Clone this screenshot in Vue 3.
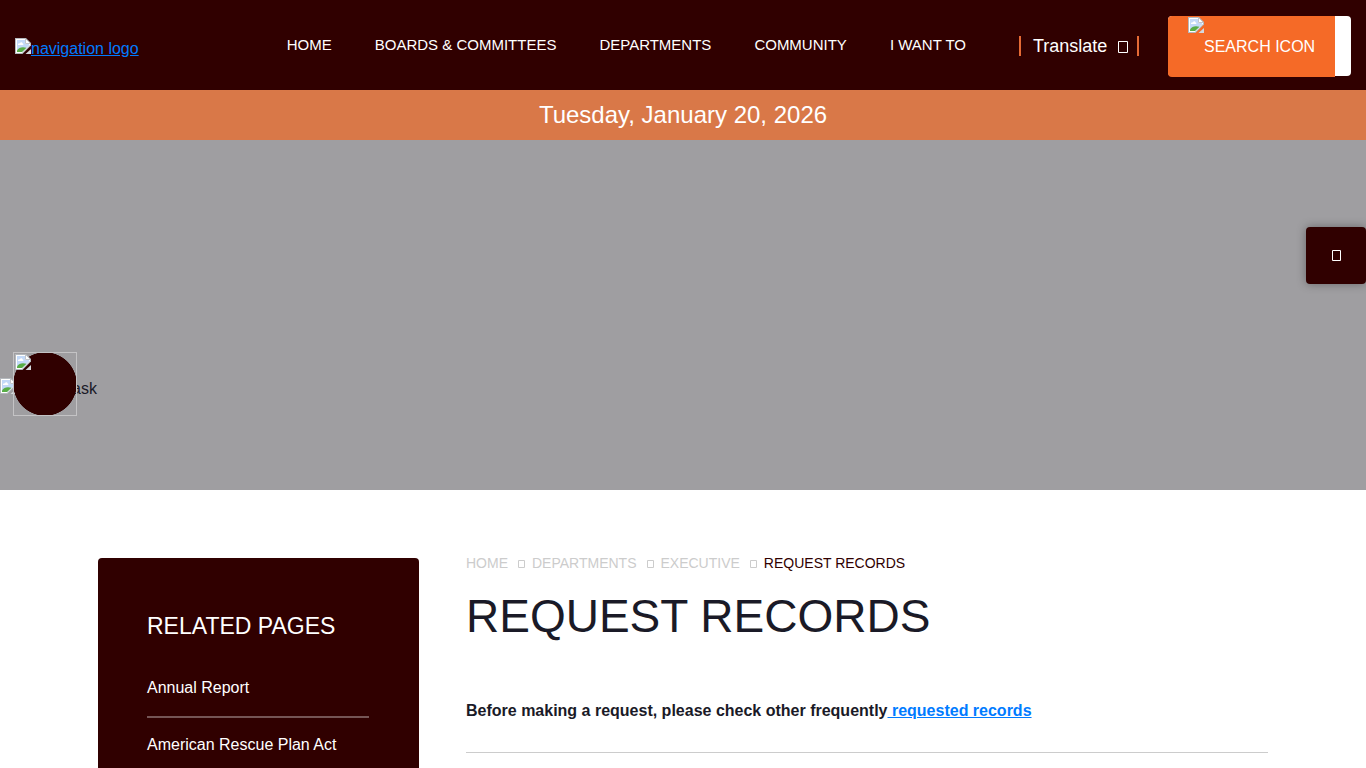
<script setup>
import { h } from 'vue'

const navItems = ['HOME', 'BOARDS & COMMITTEES', 'DEPARTMENTS', 'COMMUNITY', 'I WANT TO']
const crumbs = ['HOME', 'DEPARTMENTS', 'EXECUTIVE']
const related = ['Annual Report', 'American Rescue Plan Act']

const PictureIcon = () =>
  h('svg', { width: 16, height: 16, viewBox: '0 0 16 16', 'aria-hidden': 'true' }, [
    h('path', { d: 'M0 0h11l5 5v2.500L7.500 16H0z', fill: '#b4b8bd' }),
    h('path', { d: 'M1 1h9.500l4.500 4.500v1.500L7 15H1z', fill: '#fff' }),
    h('path', { d: 'M2 2h8v4h4v1.500L7 14H2z', fill: '#c3d9f8' }),
    h('path', { d: 'M3 7c-.3-1.200.8-2 1.800-1.600C5.300 3.800 7.400 4 7.600 5.500c1.100 0 1.200 1.500.1 1.500z', fill: '#fff' }),
    h('path', { d: 'M2 14v-1.500C4 9.500 7 8.500 11.500 9.800L7 14z', fill: '#58ad45' }),
    h('path', { d: 'M10.500.5V5.500H15.500z', fill: '#fff', stroke: '#b4b8bd', 'stroke-width': 0.8 }),
    h('path', { d: 'M16 11v5h-5.500z', fill: '#d4d8dc' })
  ])
</script>

<template>
  <div class="page">
    <header class="header">
      <a class="logo" href="#"><PictureIcon /><span>navigation logo</span></a>
      <nav class="nav" aria-label="Main">
        <a v-for="item in navItems" :key="item" href="#">{{ item }}</a>
      </nav>
      <button class="translate" type="button">
        Translate
        <svg width="10" height="12" viewBox="0 0 10 12" aria-hidden="true"><path d="M.5.5h9v11h-9z" /></svg>
      </button>
      <div class="search">
        <button type="button"><PictureIcon /><span>SEARCH ICON</span></button>
      </div>
    </header>

    <div class="date">Tuesday, January 20, 2026</div>

    <section class="hero">
      <div class="mask"><PictureIcon /><span>video mask</span></div>
      <button class="access" type="button" aria-label="Accessibility"><PictureIcon /></button>
      <button class="share" type="button" aria-label="Share">
        <svg width="9" height="11" viewBox="0 0 9 11" aria-hidden="true"><path d="M.5.5h8v10h-8z" /></svg>
      </button>
    </section>

    <main class="main">
      <aside class="sidebar">
        <h2>RELATED PAGES</h2>
        <ul>
          <li v-for="item in related" :key="item"><a href="#">{{ item }}</a></li>
        </ul>
      </aside>
      <article class="content">
        <nav class="crumbs" aria-label="Breadcrumb">
          <template v-for="crumb in crumbs" :key="crumb">
            <a href="#">{{ crumb }}</a>
            <svg width="7" height="8" viewBox="0 0 7 8" aria-hidden="true"><path d="M.5.5h6v7h-6z" /></svg>
          </template>
          <span>REQUEST RECORDS</span>
        </nav>
        <h1>REQUEST RECORDS</h1>
        <p>Before making a request, please check other frequently<a href="#"> requested records</a></p>
        <hr />
      </article>
    </main>
  </div>
</template>

<style>
body {
  margin: 0;
  overflow: hidden;
}
</style>

<style scoped>
.page {
  height: 100vh;
  overflow: hidden;
  display: flex;
  flex-direction: column;
  background: #fff;
  color: #1a1a27;
  font: 16px/24px "Liberation Sans", Arial, sans-serif;
}
.page * {
  box-sizing: border-box;
}
button {
  font: inherit;
  color: #fff;
  border: 0;
  padding: 0;
  background: none;
  cursor: pointer;
}
svg {
  flex: none;
}
svg path:only-child {
  fill: none;
  stroke: currentColor;
}
.header {
  flex: none;
  display: flex;
  align-items: center;
  height: 90px;
  padding: 0 15px;
  background: #300000;
}
.logo {
  display: flex;
  align-items: center;
  margin: 8px auto 0 0;
  color: #007bff;
}
.logo svg {
  margin-bottom: 6px;
}
.nav {
  display: flex;
  gap: 43px;
  margin-right: 53px;
  font-size: 15px;
}
.nav a {
  color: #fff;
  text-decoration: none;
  white-space: nowrap;
}
.translate {
  display: flex;
  align-items: center;
  justify-content: space-between;
  width: 120px;
  height: 20px;
  margin: 2px 29px 0 0;
  padding: 0 9px 0 12px;
  border: solid #e56a35;
  border-width: 0 2px;
  font-size: 18px;
  line-height: 20px;
}
.translate svg {
  margin-top: 2px;
}
.search {
  width: 183px;
  height: 60px;
  margin-top: 2px;
  border-radius: 4px;
  background: #fff;
}
.search button {
  display: flex;
  align-items: flex-start;
  width: 167px;
  height: 61px;
  padding-left: 20px;
  border-radius: 4px 0 0 4px;
  background: #f56a27;
}
.search span {
  line-height: 61px;
}
.search svg {
  margin-top: 1px;
}
.date {
  flex: none;
  height: 50px;
  background: #d97848;
  color: #fff;
  font-size: 24px;
  line-height: 50px;
  text-align: center;
}
.hero {
  flex: none;
  position: relative;
  height: 350px;
  background: #9f9ea1;
}
.mask {
  position: absolute;
  left: 0;
  top: 237px;
  display: flex;
  align-items: center;
}
.mask svg {
  margin-bottom: 6px;
}
.access {
  position: absolute;
  left: 13px;
  top: 212px;
  display: flex;
  width: 64px;
  height: 64px;
  padding: 1px;
  border: 1px solid #c4c3c5;
  background: radial-gradient(circle closest-side, #300000 98%, transparent 100%) border-box;
}
.share {
  position: absolute;
  right: 0;
  top: 87px;
  display: flex;
  align-items: center;
  justify-content: center;
  width: 60px;
  height: 57px;
  border-radius: 4px;
  background: #300000;
  box-shadow: 0 0 10px rgba(0, 0, 0, 0.35);
}
.main {
  flex: none;
  display: flex;
  align-items: flex-start;
  gap: 47px;
  width: 100%;
  max-width: 1366px;
  margin: 0 auto;
  padding: 68px 98px 0;
}
.sidebar {
  flex: none;
  width: 321px;
  padding: 49px 50px 49px 49px;
  border-radius: 4px;
  background: #300000;
  color: #fff;
}
h2 {
  margin: 0;
  font-size: 23px;
  line-height: 38px;
  font-weight: 400;
}
ul {
  margin: 16px 0 0;
  padding: 0;
  list-style: none;
}
li {
  padding: 15px 0 16px;
  border-bottom: 2px solid #755555;
}
li a {
  color: #fff;
  text-decoration: none;
}
.content {
  flex: 1;
}
.crumbs {
  display: flex;
  align-items: center;
  font-size: 14px;
  line-height: 10px;
  color: #300000;
}
.crumbs a {
  color: #ccc;
  text-decoration: none;
}
.crumbs svg {
  margin: 2px 7px 0 10px;
  color: #ccc;
}
h1 {
  margin: 18px 0 0;
  font-size: 46px;
  line-height: 60px;
  font-weight: 400;
}
p {
  margin: 53px 0 0;
  font-weight: 700;
}
p a {
  color: #007bff;
}
hr {
  margin: 29px 0;
  border: 0;
  border-top: 1px solid #ccc;
}
</style>
